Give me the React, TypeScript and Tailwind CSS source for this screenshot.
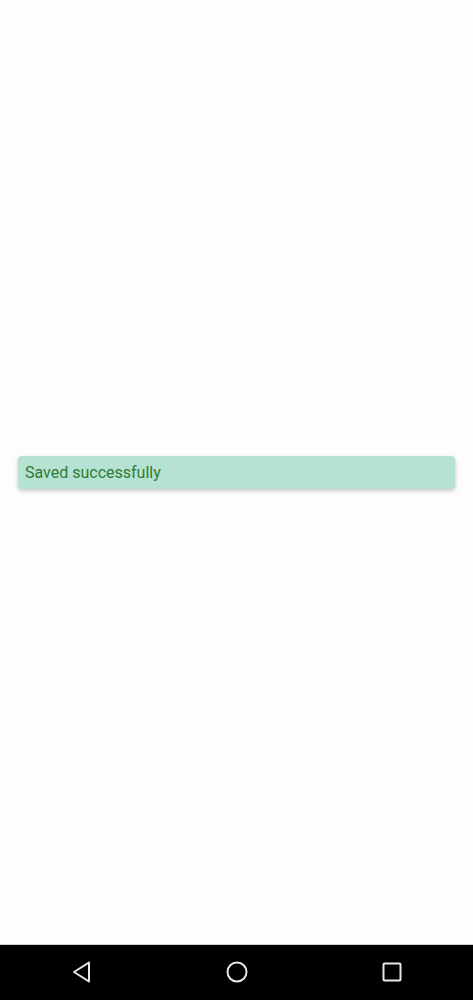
export default function App() {
  return (
    <div className="flex h-screen w-full flex-col bg-[#fefdfe] font-['Roboto',sans-serif]">
      <main className="flex flex-1 items-center px-[18px]">
        <div className="flex h-[33px] w-full items-center rounded-[4px] bg-[#b6e2d3] px-[7px] pt-px shadow-[0_2px_4px_rgba(0,0,0,0.22)]">
          <span className="text-[16px] text-[#2e7d32]">Saved successfully</span>
        </div>
      </main>
      <nav className="flex h-[56px] items-center justify-between border-t border-[#d0d0d0] bg-black px-[69px] pb-px">
        <svg width="24" height="24" viewBox="0 0 24 24">
          <path d="M20 2.5 L5 12 L20 21.5 Z" fill="none" stroke="#e8e8e8" strokeWidth="2" strokeLinejoin="round" />
        </svg>
        <svg width="24" height="24" viewBox="0 0 24 24">
          <circle cx="12" cy="12" r="9.5" fill="none" stroke="#e8e8e8" strokeWidth="2" />
        </svg>
        <svg width="24" height="24" viewBox="0 0 24 24">
          <rect x="3.5" y="3.5" width="17" height="17" rx="1" fill="none" stroke="#e8e8e8" strokeWidth="2" />
        </svg>
      </nav>
    </div>
  );
}
